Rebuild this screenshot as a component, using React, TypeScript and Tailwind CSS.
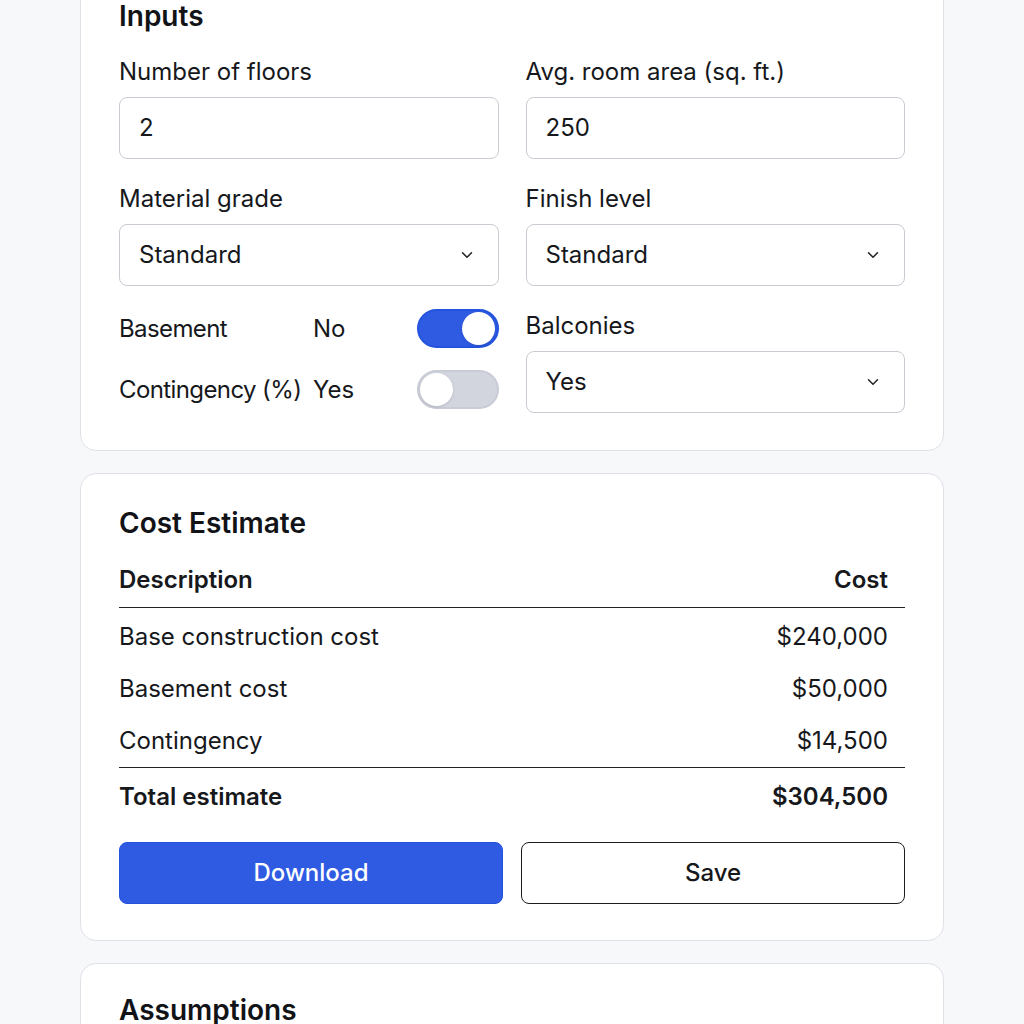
import { ChevronDown } from "lucide-react"

type Row = { label: string; cost: string }

const rows: Row[] = [
  { label: "Base construction cost", cost: "$240,000" },
  { label: "Basement cost", cost: "$50,000" },
  { label: "Contingency", cost: "$14,500" },
]

function Field({ label, value, select }: { label: string; value: string; select?: boolean }) {
  return (
    <div>
      <div className="text-[24px] leading-[28px] text-[#16181c]">{label}</div>
      <div className="mt-[11px] flex h-[62px] items-center justify-between rounded-[8px] border border-[#c9cbd2] bg-white pl-[19px] pr-[22px] text-[24px] text-[#16181c]">
        <span>{value}</span>
        {select && <ChevronDown className="h-[18px] w-[18px] text-[#222]" strokeWidth={2} />}
      </div>
    </div>
  )
}

function Toggle({ on }: { on: boolean }) {
  return (
    <div
      className={
        on
          ? "flex h-[39px] w-[82px] items-center justify-end rounded-full border-2 border-[#2454de] bg-[#2f5be3] px-[2px]"
          : "flex h-[39px] w-[82px] items-center justify-start rounded-full border-2 border-[#c9ccd6] bg-[#d2d5de] px-[1px]"
      }
    >
      <div className="h-[33px] w-[33px] rounded-full bg-white shadow-sm" />
    </div>
  )
}

function ToggleRow({ label, value, on }: { label: string; value: string; on: boolean }) {
  return (
    <div className="flex h-[39px] items-center text-[24px] text-[#16181c]">
      <span className="w-[194px] whitespace-nowrap tracking-[-0.6px]">{label}</span>
      <span className="flex-1">{value}</span>
      <Toggle on={on} />
    </div>
  )
}

export default function App() {
  return (
    <div
      className="min-h-screen overflow-hidden bg-[#f7f8fa] px-[80px]"
      style={{ fontFamily: "Inter, 'Noto Sans', sans-serif" }}
    >
      <div className="-mt-[35px] flex flex-col gap-[22px]">
        <section className="rounded-[16px] border border-[#dfe1e6] bg-white px-[38px] pb-[37px] pt-[34px]">
          <h2 className="text-[28px] font-semibold leading-[32px] text-[#111317]">Inputs</h2>
          <div className="mt-[26px] grid grid-cols-2 gap-x-[27px] gap-y-[26px]">
            <Field label="Number of floors" value="2" />
            <Field label="Avg. room area (sq. ft.)" value="250" />
            <Field label="Material grade" value="Standard" select />
            <Field label="Finish level" value="Standard" select />
            <div className="-mt-[3px] flex flex-col gap-[22px]">
              <ToggleRow label="Basement" value="No" on />
              <ToggleRow label="Contingency (%)" value="Yes" on={false} />
            </div>
            <Field label="Balconies" value="Yes" select />
          </div>
        </section>

        <section className="rounded-[16px] border border-[#dfe1e6] bg-white px-[38px] pb-[36px] pt-[33px]">
          <h2 className="text-[28px] font-semibold leading-[32px] text-[#111317]">Cost Estimate</h2>
          <div className="mt-[27px] flex justify-between border-b border-[#222] pb-[13px] pr-[17px] text-[24px] font-semibold leading-[28px] text-[#16181c]">
            <span>Description</span>
            <span>Cost</span>
          </div>
          <div className="border-b border-[#222] pt-[3px]">
            {rows.map((r) => (
              <div
                key={r.label}
                className="flex h-[52px] items-center justify-between pr-[17px] text-[24px] text-[#16181c]"
              >
                <span>{r.label}</span>
                <span>{r.cost}</span>
              </div>
            ))}
          </div>
          <div className="flex h-[58px] items-center justify-between pr-[17px] text-[24px] font-semibold text-[#16181c]">
            <span>Total estimate</span>
            <span>$304,500</span>
          </div>
          <div className="mt-[16px] grid grid-cols-2 gap-[18px]">
            <button className="h-[62px] rounded-[8px] border border-[#2352dc] bg-[#2f5be3] text-[24px] font-medium text-white">
              Download
            </button>
            <button className="h-[62px] rounded-[8px] border-[1.5px] border-[#1c1c1c] bg-white text-[24px] font-medium text-[#16181c]">
              Save
            </button>
          </div>
        </section>

        <section className="rounded-[16px] border border-[#dfe1e6] bg-white px-[38px] pb-[36px] pt-[30px]">
          <h2 className="text-[28px] font-semibold leading-[32px] text-[#111317]">Assumptions</h2>
        </section>
      </div>
    </div>
  )
}
